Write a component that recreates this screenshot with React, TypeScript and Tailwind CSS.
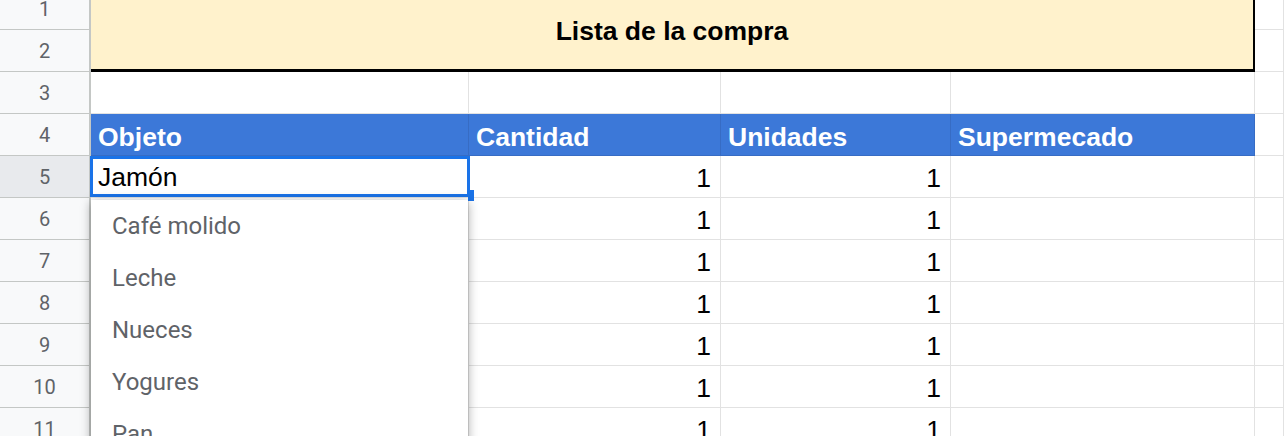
const rowHead =
  "bg-[#f8f9fa] border-r-2 border-r-[#c4c7c5] border-b border-b-[#c4c7c5] flex items-center justify-center text-[20px] text-[#5f6368] font-['Roboto',sans-serif] pt-[1px]"
const cell = 'border-r border-b border-[#e2e2e2] bg-white'
const head =
  "bg-[#3c78d8] border-r border-b border-[#376cc4] text-white font-bold text-[26.5px] pl-[7px] pt-[6px] flex items-center"
const num = `${cell} flex items-center justify-end pr-[9px] pt-[4px] text-[26.5px] text-black`

const sugerencias = ['Café molido', 'Leche', 'Nueces', 'Yogures', 'Pan']

function DataRow({ n, selected, label }: { n: number; selected?: boolean; label?: string }) {
  return (
    <>
      <div className={`${rowHead} ${selected ? '!bg-[#e8eaed]' : ''}`}>{n}</div>
      <div className={`${cell} flex items-center pl-[7px] pt-[2px] text-[26.5px] text-black`}>{label}</div>
      <div className={num}>1</div>
      <div className={num}>1</div>
      <div className={cell} />
      <div className={cell} />
    </>
  )
}

export default function App() {
  return (
    <div className="relative w-[1284px] h-[436px] overflow-hidden bg-white font-['Liberation_Sans',Arial,sans-serif]">
      <div className="grid grid-cols-[91px_378px_252px_230px_304px_1fr] auto-rows-[42px] -mt-[12px]">
        {/* filas 1-2: título combinado */}
        <div className={rowHead}>1</div>
        <div className="col-span-4 row-span-2 bg-[#fff2cc] border-r-2 border-b-[3px] border-black flex items-center justify-center pt-[6px] font-bold text-[26.5px] text-black">
          Lista de la compra
        </div>
        <div className={cell} />
        <div className={rowHead}>2</div>
        <div className={cell} />

        {/* fila 3 */}
        <div className={rowHead}>3</div>
        <div className={cell} />
        <div className={cell} />
        <div className={cell} />
        <div className={cell} />
        <div className={cell} />

        {/* fila 4: cabecera */}
        <div className={rowHead}>4</div>
        <div className={head}>Objeto</div>
        <div className={head}>Cantidad</div>
        <div className={head}>Unidades</div>
        <div className={head}>Supermecado</div>
        <div className={cell} />

        <DataRow n={5} selected label="Jamón" />
        {[6, 7, 8, 9, 10, 11].map((n) => (
          <DataRow key={n} n={n} />
        ))}
      </div>

      {/* celda activa */}
      <div className="absolute left-[90px] top-[156px] w-[380px] h-[41px] border-[3px] border-[#1a73e8]" />
      <div className="absolute left-[468px] top-[190px] w-[6px] h-[11px] bg-[#1a73e8]" />

      {/* desplegable de sugerencias */}
      <div className="absolute left-[91px] top-[200px] w-[377px] h-[280px] bg-white shadow-[0_2px_10px_rgba(0,0,0,0.35)]">
        {sugerencias.map((s) => (
          <div
            key={s}
            className="h-[52px] flex items-center pl-[21px] text-[24px] text-[#5f6368] font-['Roboto',sans-serif]"
          >
            {s}
          </div>
        ))}
      </div>
    </div>
  )
}
